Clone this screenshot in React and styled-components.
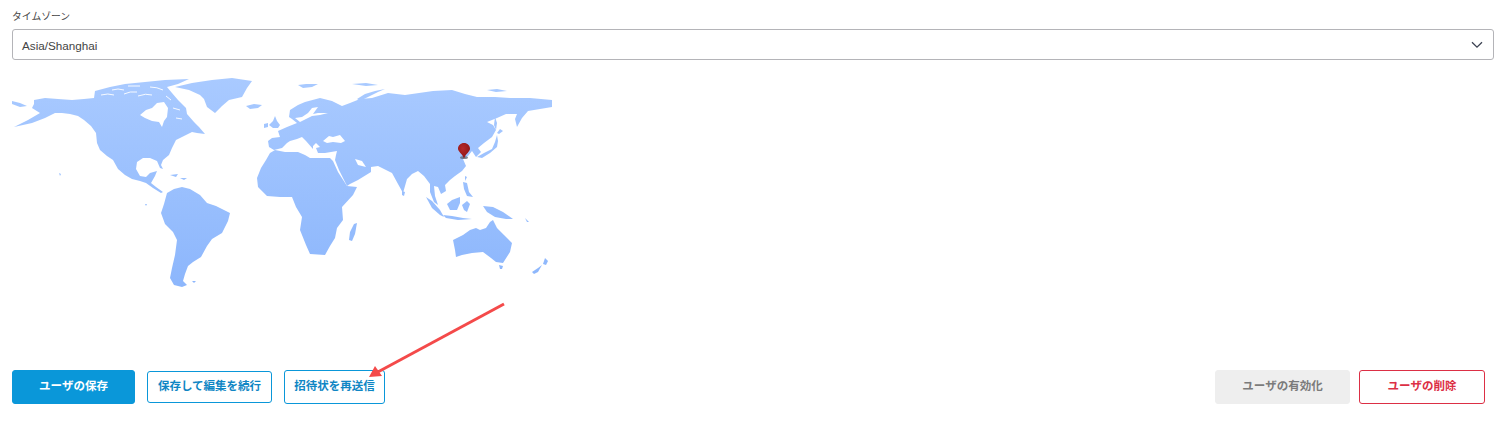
import React from "react";
import styled, { createGlobalStyle } from "styled-components";

const Global = createGlobalStyle`
  html, body { margin: 0; padding: 0; background: #fff; }
  body { font-family: "Liberation Sans", "Noto Sans CJK JP", sans-serif; }
`;

const Page = styled.div`
  position: relative;
  width: 1512px;
  height: 430px;
  box-sizing: border-box;
  padding: 10px 18px 0 12px;
  overflow: hidden;
`;

const FieldLabel = styled.div`
  height: 19px;
  font-size: 9.8px;
  line-height: 12px;
  color: #444;
  font-family: "Noto Sans CJK JP", sans-serif;
`;

const SelectBox = styled.div`
  box-sizing: border-box;
  height: 31px;
  display: flex;
  align-items: center;
  justify-content: space-between;
  padding: 1px 10px 0 9px;
  border: 1px solid #b4b4b8;
  border-radius: 3px;
  font-size: 11.7px;
  color: #444;
`;

const MapWrap = styled.div`
  width: 540px;
  height: 220px;
  margin-top: 15px;
`;

const Actions = styled.div`
  display: flex;
  align-items: center;
  justify-content: space-between;
  margin-top: 75px;
  padding-right: 9px;
`;

const Group = styled.div`
  display: flex;
  align-items: center;
  gap: ${(p) => p.$gap}px;
`;

const Button = styled.button`
  box-sizing: border-box;
  width: ${(p) => p.$w}px;
  height: ${(p) => p.$h || 34}px;
  padding: 0 0 2px;
  border-radius: 3px;
  border: 1px solid ${(p) => ({ primary: "#0a97d9", outline: "#0a97d9", muted: "#eeeeee", danger: "#dc2f45" }[p.$kind])};
  background: ${(p) => ({ primary: "#0a97d9", outline: "#fff", muted: "#eeeeee", danger: "#fff" }[p.$kind])};
  color: ${(p) => ({ primary: "#fff", outline: "#0f86c4", muted: "#7b7b7b", danger: "#dc2f45" }[p.$kind])};
  font-family: "Noto Sans CJK JP", sans-serif;
  font-size: 11.5px;
  font-weight: 700;
  line-height: 1;
`;

const ArrowOverlay = styled.svg`
  position: absolute;
  left: 360px;
  top: 295px;
`;

const land = [
  // North America + Arctic Canada
  "M34 100L45 98L58 99L72 100L84 99L94 98L95 91L110 87L125 84L145 82L165 80L189 79L178 84L167 87L172 93L178 100L186 108L187 114L194 122L199 127L205 134L197 133L192 132L186 135L182 137L176 140L172 148L169 155L163 160L161 165L163 169L160 168L157 161L150 158L143 158L137 162L136 169L140 176L146 177L150 173L157 171L155 176L151 183L156 187L163 192L161 193L153 188L146 183L140 181L132 179L125 175L118 169L113 160L107 156L100 150L97 143L96 133L91 126L84 120L78 116L70 114L62 113L55 113L45 118L32 123L14 127L28 120L40 113L32 108L34 104Z",
  "M12 101L20 103L27 106L20 107L12 104Z",
  // Greenland
  "M175 87L192 83L212 80L232 78L252 81L247 88L242 97L229 100L222 106L215 113L207 107L204 99L200 95L189 90Z",
  // Iceland
  "M246 106L254 104L262 105L258 108L250 109Z",
  // UK, Ireland
  "M269 125L273 121L275 116L277 121L280 125L278 128L273 128Z",
  "M264 124L268 123L268 127L264 128Z",
  // South America
  "M167 193L174 189L182 187L190 189L200 195L207 203L216 206L230 213L228 221L222 233L212 239L207 246L201 257L193 262L188 266L185 274L183 281L187 285L182 287L174 285L170 278L172 268L175 255L177 240L173 232L165 224L161 213L164 204Z",
  // Africa
  "M270 153L275 150L285 152L298 152L305 155L310 158L330 158L333 161L338 172L347 186L357 187L353 195L342 207L343 220L337 228L335 238L330 246L325 255L310 254L306 245L300 230L302 217L296 207L292 197L280 197L267 196L258 187L257 178L261 168L266 160Z",
  // Madagascar
  "M349 240L350 232L354 224L357 223L355 234L352 241Z",
  // Eurasia
  "M268 141L272 138L280 137L278 131L287 127L297 123L292 119L289 117L290 110L298 105L305 102L320 98L332 101L342 106L350 103L360 99L372 98L388 93L405 95L433 91L452 90L465 94L477 97L495 97L510 98L530 98L552 100L552 107L540 109L528 111L522 118L517 127L515 119L517 114L506 114L497 118L487 122L493 125L496 130L492 137L484 143L478 148L481 152L476 157L472 151L468 156L463 159L466 166L462 171L455 176L450 180L445 185L446 191L441 194L438 187L434 186L435 196L438 205L434 202L430 192L430 184L424 176L418 171L412 174L407 179L403 193L398 184L392 173L378 166L371 167L371 172L358 180L350 184L347 186L339 170L335 160L336 155L337 151L325 153L318 153L316 148L320 147L316 143L313 146L313 149L306 141L302 137L297 139L290 141L287 143L282 148L274 150L269 147Z",
  // Novaya Zemlya, Svalbard, Siberian islands
  "M357 99L365 94L375 91L385 89L378 92L368 97L360 101Z",
  "M298 85L306 84L318 84L312 87L303 88Z",
  "M352 84L366 83L378 85L366 86Z",
  "M487 90L497 89L507 91L496 92Z",
  // Japan, Sakhalin, Kurils
  "M477 157L484 153L492 149L495 142L497 135L498 141L497 147L490 153L482 158Z",
  "M497 133L500 129L503 131L499 134Z",
  "M495 117L497 123L496 130L494 125Z",
  // Sri Lanka
  "M402 191L405 192L404 196L402 195Z",
  // Taiwan
  "M465 176L467 177L465 181Z",
  // Sumatra, Java and chain
  "M426 197L432 201L440 210L444 217L440 215L432 208Z",
  "M443 215L452 216L463 218L472 219L458 220L446 218Z",
  // Borneo
  "M447 204L452 200L460 197L460 203L457 210L450 210Z",
  // Sulawesi
  "M462 205L467 201L470 204L467 212L464 210Z",
  // Philippines
  "M463 182L467 183L469 192L473 197L467 196L464 189Z",
  // New Guinea
  "M483 206L493 207L503 212L513 219L506 219L495 217L487 212Z",
  // Australia
  "M453 240L463 235L470 230L476 228L480 230L486 228L490 222L493 220L497 228L504 235L512 243L510 252L503 263L496 262L491 258L483 252L472 253L462 255L456 257L455 250Z",
  "M499 265L503 266L502 269L500 269Z",
  // New Zealand
  "M532 272L538 268L542 265L538 272L534 274Z",
  "M543 264L545 258L548 261L546 265Z",
  // Small islands
  "M59 173L61 174L60 176Z",
  "M145 204L147 204L146 206Z",
  "M192 281L196 281L194 283Z",
  "M170 175L178 174L176 177Z",
  "M180 178L187 178L184 180Z",
  "M525 218L529 222L527 222Z",
];

const seas = [
  "M323 141L329 136L333 137L340 135L345 141L341 143L333 142L327 143Z", // Black Sea
  "M295 118L300 122L306 119L312 116L320 115L328 113L318 113L313 114L318 107L312 108L308 113L302 117Z", // Baltic
  "M355 159L362 161L366 167L358 165Z", // Persian Gulf
  "M140 115L146 110L152 108L157 103L164 102L168 108L167 117L164 121L162 127L159 122L152 121L145 118Z", // Hudson Bay
];

const channels = [
  "M101 95Q108 93 114 95",
  "M112 90Q118 88 124 90",
  "M124 94Q130 91 137 92",
  "M138 96Q146 93 152 95",
  "M150 87Q157 87 163 90",
  "M166 96L171 100",
  "M173 108L180 110",
  "M176 118L182 119",
  "M128 86L140 86",
];

const WorldMap = () => (
  <svg width="540" height="220" viewBox="12 75 540 220" aria-hidden="true">
    <defs>
      <linearGradient id="landFill" gradientUnits="userSpaceOnUse" x1="0" y1="78" x2="0" y2="290">
        <stop offset="0" stopColor="#a9caff" />
        <stop offset="1" stopColor="#8cb6fc" />
      </linearGradient>
      <filter id="soft" x="-5%" y="-5%" width="110%" height="110%">
        <feGaussianBlur stdDeviation="0.6" />
      </filter>
      <radialGradient id="pinFill" cx="0.4" cy="0.35" r="0.7">
        <stop offset="0" stopColor="#b5282a" />
        <stop offset="1" stopColor="#8c1414" />
      </radialGradient>
    </defs>
    <g filter="url(#soft)">
      {land.map((d) => (
        <path key={d} d={d} fill="url(#landFill)" />
      ))}
      {seas.map((d) => (
        <path key={d} d={d} fill="#fff" />
      ))}
      {channels.map((d) => (
        <path key={d} d={d} fill="none" stroke="#fff" strokeWidth="0.9" />
      ))}
    </g>
    <ellipse cx="464" cy="157.5" rx="4" ry="1.6" fill="#5c6470" opacity="0.75" />
    <path
      d="M464 143C460.6 143 458 145.6 458 148.7C458 151.8 462.2 153.4 464 158.5C465.8 153.4 470 151.8 470 148.7C470 145.6 467.4 143 464 143Z"
      fill="url(#pinFill)"
    />
  </svg>
);

const Chevron = () => (
  <svg width="12" height="8" viewBox="0 0 12 8" fill="none" stroke="#3c4252" strokeWidth="1.3" aria-hidden="true">
    <path d="M1 1.2L6 6.2L11 1.2" />
  </svg>
);

export default function App() {
  return (
    <Page>
      <Global />
      <FieldLabel>タイムゾーン</FieldLabel>
      <SelectBox>
        Asia/Shanghai
        <Chevron />
      </SelectBox>
      <MapWrap>
        <WorldMap />
      </MapWrap>
      <Actions>
        <Group $gap={12}>
          <Button $kind="primary" $w={123}>ユーザの保存</Button>
          <Button $kind="outline" $w={125} $h={32}>保存して編集を続行</Button>
          <Button $kind="outline" $w={101}>招待状を再送信</Button>
        </Group>
        <Group $gap={9}>
          <Button $kind="muted" $w={135}>ユーザの有効化</Button>
          <Button $kind="danger" $w={126}>ユーザの削除</Button>
        </Group>
      </Actions>
      <ArrowOverlay width="150" height="90" viewBox="360 295 150 90" aria-hidden="true">
        <path d="M504 304L376 373" stroke="#f44a4a" strokeWidth="3" fill="none" />
        <path d="M369 377L375 366L382 376Z" fill="#f44a4a" />
      </ArrowOverlay>
    </Page>
  );
}
